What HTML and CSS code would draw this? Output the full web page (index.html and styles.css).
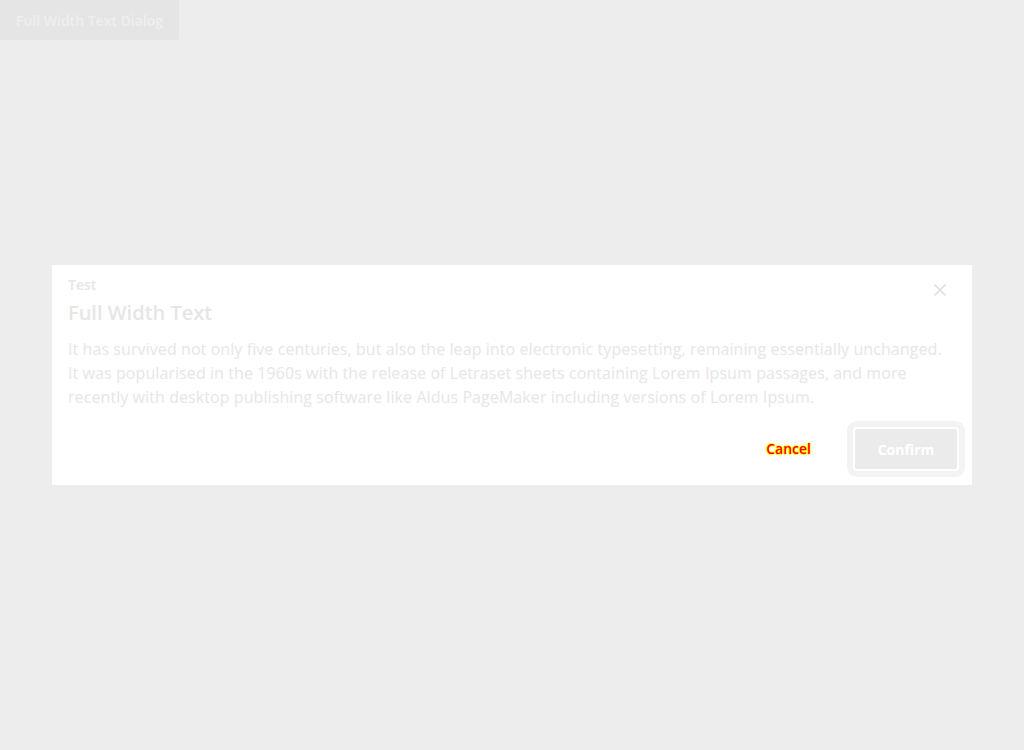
FILE: index.html
```html
<!DOCTYPE html>
<html>
<head>
<meta charset="utf-8">
<link rel="stylesheet" href="styles.css">
</head>
<body>
<button class="trigger">Full Width Text Dialog</button>
<div class="overlay">
  <div class="dialog">
    <div class="head">
      <div class="titles">
        <div class="eyebrow">Test</div>
        <div class="title">Full Width Text</div>
      </div>
      <button class="close" aria-label="Close">
        <svg width="14" height="14" viewBox="0 0 14 14"><path d="M1.5 1.5 L12.5 12.5 M12.5 1.5 L1.5 12.5" stroke="#dcdcdc" stroke-width="1.5" fill="none"/></svg>
      </button>
    </div>
    <p class="body">It has survived not only five centuries, but also the leap into electronic typesetting, remaining essentially unchanged. It was popularised in the 1960s with the release of Letraset sheets containing Lorem Ipsum passages, and more recently with desktop publishing software like Aldus PageMaker including versions of Lorem Ipsum.</p>
    <div class="actions">
      <button class="cancel">Cancel</button>
      <button class="confirm">Confirm</button>
    </div>
  </div>
</div>
</body>
</html>
```
FILE: styles.css
```css
html, body {
  margin: 0;
  padding: 0;
  height: 100%;
}
body {
  background: #ededed;
  font-family: "Open Sans", "Liberation Sans", sans-serif;
}
button {
  font-family: inherit;
  cursor: pointer;
}
.trigger {
  display: block;
  width: 179px;
  height: 40px;
  margin: 0;
  border: none;
  border-bottom-right-radius: 2px;
  background: #e5e5e5;
  color: #efefef;
  font-size: 14px;
  font-weight: 600;
  padding: 0;
  white-space: nowrap;
}
.overlay {
  display: flex;
  justify-content: center;
  padding-top: 225px;
}
.dialog {
  width: 920px;
  box-sizing: border-box;
  background: #ffffff;
  padding: 12px 16px 14px 16px;
}
.head {
  display: flex;
  justify-content: space-between;
  align-items: flex-start;
}
.eyebrow {
  font-size: 14px;
  font-weight: 600;
  color: #e6e6e6;
  line-height: 16px;
}
.title {
  font-size: 20px;
  font-weight: 600;
  color: #e6e6e6;
  line-height: 28px;
  margin-top: 6px;
}
.close {
  border: none;
  background: none;
  padding: 0;
  width: 14px;
  height: 14px;
  margin-top: 6px;
  margin-right: 9px;
}
.close svg {
  display: block;
}
.body {
  margin: 10px 0 0 0;
  max-width: 880px;
  font-size: 16px;
  line-height: 24px;
  letter-spacing: 0.08px;
  color: #e6e6e6;
}
.actions {
  display: flex;
  justify-content: flex-end;
  align-items: center;
  gap: 42px;
  margin-top: 18px;
  margin-right: -3px;
}
.cancel {
  border: none;
  background: none;
  padding: 0 0 2px 0;
  font-size: 14px;
  font-weight: 600;
  color: #ff0000;
  -webkit-font-smoothing: none;
  text-shadow: 1px 0 0 #ffff00, -1px 0 0 #ffff00, 0 1px 0 #ffff00, 0 -1px 0 #ffff00;
}
.confirm {
  width: 106px;
  height: 44px;
  border: 2px solid #ffffff;
  border-radius: 4px;
  background: #ebebeb;
  color: #ffffff;
  font-size: 14px;
  font-weight: 700;
  box-shadow: 0 0 0 6px #f3f3f3;
}
```
